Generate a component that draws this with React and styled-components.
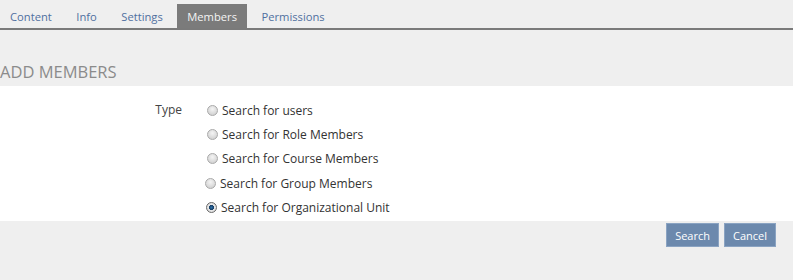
import styled, { createGlobalStyle } from "styled-components";

const GlobalStyle = createGlobalStyle`
  body {
    margin: 0;
    background: #efefef;
    font-family: "Open Sans", "Liberation Sans", sans-serif;
  }
`;

const Page = styled.div`
  width: 793px;
  height: 280px;
  overflow: hidden;
`;

const TabBar = styled.div`
  display: flex;
  height: 24px;
  margin-top: 4px;
  border-bottom: 2px solid #7a7a7a;
`;

const Tab = styled.div`
  display: flex;
  align-items: center;
  padding: 0 10px;
  margin-right: 4.5px;
  font-size: 11.2px;
  color: #4f6f9f;
  cursor: pointer;
  ${(props) =>
    props.active &&
    `background: #7b7b7b;
  color: #f4f4f4;`}
`;

const Heading = styled.h2`
  margin: 0;
  padding: 29px 0 0 0;
  height: 26px;
  font-size: 16.5px;
  font-weight: 400;
  color: #8b8b8b;
  line-height: 26px;
`;

const Panel = styled.div`
  background: #ffffff;
  margin-top: 1px;
  padding: 12px 0 2px 0;
  display: grid;
  grid-template-columns: 182px 1fr;
`;

const Label = styled.div`
  text-align: right;
  font-size: 12px;
  color: #444;
  line-height: 24px;
`;

const Options = styled.div`
  display: flex;
  flex-direction: column;
  padding-left: 25px;
`;

const Option = styled.label`
  display: flex;
  align-items: center;
  height: 24.3px;
  font-size: 12px;
  color: #333;
  margin-left: ${(props) => props.shift || 0}px;
`;

const Radio = styled.span`
  width: 9px;
  height: 9px;
  border-radius: 50%;
  border: 1px solid #a9a9a9;
  background: radial-gradient(circle at 50% 35%, #f4f4f4 0%, #d6d6d6 70%, #c4c4c4 100%);
  margin-right: 4px;
  ${(props) =>
    props.checked &&
    `border-color: #6a6a6a;
  background: radial-gradient(circle, #2a6fa8 0%, #163e66 35%, #e8e8e8 45%, #d0d0d0 100%);`}
`;

const Actions = styled.div`
  display: flex;
  justify-content: flex-end;
  gap: 5px;
  padding: 2px 17px 0 0;
`;

const Button = styled.button`
  height: 24px;
  padding: 0 8px;
  background: #6c89ad;
  border: 1px solid #8aa3c2;
  color: #ffffff;
  font-family: "Open Sans", "Liberation Sans", sans-serif;
  font-size: 11px;
  cursor: pointer;
`;

const tabs = ["Content", "Info", "Settings", "Members", "Permissions"];
const options = [
  { text: "Search for users" },
  { text: "Search for Role Members" },
  { text: "Search for Course Members" },
  { text: "Search for Group Members", shift: -2 },
  { text: "Search for Organizational Unit", shift: -1, checked: true },
];

export default function App() {
  return (
    <>
      <GlobalStyle />
      <Page>
        <TabBar>
          {tabs.map((t) => (
            <Tab key={t} active={t === "Members"}>
              {t}
            </Tab>
          ))}
        </TabBar>
        <Heading>ADD MEMBERS</Heading>
        <Panel>
          <Label>Type</Label>
          <Options>
            {options.map((o) => (
              <Option key={o.text} shift={o.shift}>
                <Radio checked={o.checked} />
                {o.text}
              </Option>
            ))}
          </Options>
        </Panel>
        <Actions>
          <Button>Search</Button>
          <Button>Cancel</Button>
        </Actions>
      </Page>
    </>
  );
}
